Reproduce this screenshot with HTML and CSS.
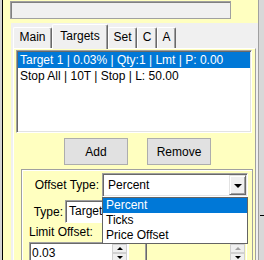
FILE: index.html
```html
<!DOCTYPE html>
<html lang="en">
<head>
    <meta charset="UTF-8">
    <title>Targets</title>
    <link rel="stylesheet" href="styles.css">
</head>
<body>
    <div class="screen">
        <div class="edge-left"></div>
        <div class="frame">
            <div class="status-box"></div>
            <div class="tab-control">
                <div class="tab-strip">
                    <div class="tab tab-main">Main</div>
                    <div class="tab tab-targets active">Targets</div>
                    <div class="tab tab-set">Set</div>
                    <div class="tab tab-c">C</div>
                    <div class="tab tab-a">A</div>
                </div>
                <div class="tab-page">
                    <ul class="listbox">
                        <li class="selected">Target 1 | 0.03% | Qty:1 | Lmt | P: 0.00</li>
                        <li>Stop All | 10T | Stop | L: 50.00</li>
                    </ul>
                    <div class="buttons">
                        <button class="btn btn-add">Add</button>
                        <button class="btn btn-remove">Remove</button>
                    </div>
                    <div class="group">
                        <div class="row row-offset">
                            <label class="lbl lbl-offset">Offset Type:</label>
                            <div class="combo">
                                <span class="combo-text">Percent</span>
                                <span class="combo-arrow"></span>
                                <!-- open dropdown list -->
                                <ul class="dropdown">
                                    <li class="selected">Percent</li>
                                    <li>Ticks</li>
                                    <li>Price Offset</li>
                                </ul>
                            </div>
                        </div>
                        <div class="row row-type">
                            <label class="lbl lbl-type">Type:</label>
                            <div class="textbox">Target</div>
                        </div>
                        <div class="lbl-limit">Limit Offset:</div>
                        <div class="row row-num">
                            <div class="numeric">
                                <span class="num-text">0.03</span>
                                <span class="spin"><span class="spin-up"></span><span class="spin-down"></span></span>
                            </div>
                            <div class="numeric numeric-ro">
                                <span class="num-text"></span>
                                <span class="spin"><span class="spin-up"></span><span class="spin-down"></span></span>
                            </div>
                        </div>
                    </div>
                </div>
            </div>
        </div>
        <div class="edge-right"><span class="tick"></span></div>
    </div>
</body>
</html>
```
FILE: styles.css
```css
* {
    box-sizing: border-box;
}
body {
    margin: 0;
    font-family: "Liberation Sans", Arial, sans-serif;
    font-size: 12px;
    color: #000;
    background: #d8d8d8;
}
.screen {
    display: flex;
    height: 260px;
    overflow: hidden;
}
.edge-left {
    width: 2px;
    background: #d4d4d4;
}
.frame {
    width: 257px;
    display: flex;
    flex-direction: column;
    background: #ffffc0;
    border-left: 1px solid #000;
    border-right: 1px solid #a0a0a0;
    padding: 1px 0 0 7px;
}
.edge-right {
    flex: 1;
    background: #d8d8d8;
    position: relative;
}
.tick {
    position: absolute;
    left: 1px;
    top: 215px;
    width: 5px;
    height: 1px;
    background: #000;
}

/* top read-only box */
.status-box {
    flex-shrink: 0;
    width: 221px;
    height: 18px;
    background: #f0f0f0;
    border: 1px solid #a0a0a0;
    box-shadow: inset 1px 1px 0 #808080;
}

/* tabs */
.tab-control {
    flex: 1 0 auto;
    display: flex;
    flex-direction: column;
    margin: 4px 0 0 1px;
    background: #f0f0f0;
}
.tab-strip {
    flex-shrink: 0;
    display: flex;
    align-items: flex-end;
    height: 25px;
    padding-left: 2px;
}
.tab {
    height: 21px;
    line-height: 19px;
    text-align: center;
    background: #f0f0f0;
    border-top: 1px solid #fff;
    border-left: 1px solid #fff;
    border-right: 1px solid #696969;
    box-shadow: inset -1px 0 0 #a0a0a0;
    border-radius: 2px 2px 0 0;
}
.tab-main { width: 39px; }
.tab-targets { width: 56px; }
.tab-set { width: 29px; }
.tab-c { width: 20px; }
.tab-a { width: 19px; }
.tab.active {
    position: relative;
    z-index: 1;
    height: 25px;
    line-height: 22px;
    margin-bottom: -1px;
}
.tab-page {
    flex: 1 0 auto;
    width: 243px;
    margin-left: 2px;
    padding: 1px 0 0 2px;
    background: #ffffc0;
    border-top: 1px solid #fff;
    border-left: 1px solid #fff;
    border-right: 1px solid #a0a0a0;
}

/* list */
.listbox {
    list-style: none;
    margin: 0;
    width: 236px;
    height: 83px;
    background: #fff;
    border: 1px solid;
    border-color: #a0a0a0 #fff #fff #a0a0a0;
    box-shadow: inset 1px 1px 0 #696969, inset -1px -1px 0 #e3e3e3;
    padding: 1px;
}
.listbox li {
    height: 16px;
    line-height: 16px;
    padding-left: 2px;
    white-space: nowrap;
}
.selected {
    background: #0078d7;
    color: #fff;
}

/* buttons */
.buttons {
    display: flex;
    margin-top: 5px;
    padding-left: 48px;
    gap: 19px;
}
.btn {
    width: 64px;
    height: 27px;
    font: inherit;
    background: #e1e1e1;
    border: 1px solid #adadad;
    padding: 0;
}

/* offset group */
.group {
    margin: 4px 0 0 5px;
    width: 232px;
    height: 100px;
    border: 1px solid #a0a0a0;
    box-shadow: inset 1px 1px 0 #fff;
}
.row {
    display: flex;
    align-items: center;
}
.lbl {
    text-align: right;
}
.row-offset {
    margin-top: 3px;
}
.lbl-offset {
    width: 77px;
    margin-right: 3px;
}
.combo {
    position: relative;
    width: 146px;
    height: 24px;
    background: #fff;
    border: 1px solid;
    border-color: #a0a0a0 #fff #fff #a0a0a0;
    box-shadow: inset 1px 1px 0 #696969, inset -1px -1px 0 #e3e3e3;
    display: flex;
    align-items: center;
    justify-content: space-between;
    padding: 1px 1px 1px 5px;
}
.combo-arrow {
    width: 17px;
    height: 20px;
    background: #f0f0f0;
    border: 1px solid;
    border-color: #e3e3e3 #696969 #696969 #e3e3e3;
    box-shadow: inset 1px 1px 0 #fff, inset -1px -1px 0 #a0a0a0;
    display: flex;
    align-items: center;
    justify-content: center;
}
.combo-arrow::after {
    content: "";
    border-left: 4px solid transparent;
    border-right: 4px solid transparent;
    border-top: 4px solid #000;
    margin-top: 1px;
}
.dropdown {
    position: absolute;
    z-index: 2;
    left: -1px;
    top: 23px;
    width: 146px;
    margin: 0;
    padding: 0;
    list-style: none;
    background: #fff;
    border: 1px solid #646464;
}
.dropdown li {
    height: 15px;
    line-height: 15px;
    padding-left: 3px;
}
.row-type {
    margin-top: 3px;
}
.lbl-type {
    width: 41px;
    margin-right: 2px;
}
.textbox {
    width: 120px;
    height: 23px;
    line-height: 21px;
    padding-left: 3px;
    background: #fff;
    border: 1px solid;
    border-color: #a0a0a0 #fff #fff #a0a0a0;
    box-shadow: inset 1px 1px 0 #696969;
}
.lbl-limit {
    margin: 2px 0 0 7px;
    line-height: 15px;
}
.row-num {
    margin: 2px 0 0 7px;
    align-items: flex-start;
}
.numeric {
    width: 100px;
    height: 22px;
    display: flex;
    justify-content: space-between;
    background: #fff;
    border: 1px solid;
    border-color: #a0a0a0 #fff #fff #a0a0a0;
    box-shadow: inset 1px 1px 0 #696969;
    padding: 1px 1px 0 2px;
}
.num-text {
    line-height: 19px;
}
.numeric-ro {
    width: 102px;
    margin-left: 16px;
    background: #ffffc0;
}
.spin {
    width: 15px;
    display: flex;
    flex-direction: column;
}
.spin-up, .spin-down {
    height: 9px;
    background: #f0f0f0;
    border: 1px solid #d0d0d0;
    display: flex;
    align-items: center;
    justify-content: center;
}
.spin-up::after {
    content: "";
    border-left: 3px solid transparent;
    border-right: 3px solid transparent;
    border-bottom: 3px solid #000;
}
.spin-down::after {
    content: "";
    border-left: 3px solid transparent;
    border-right: 3px solid transparent;
    border-top: 3px solid #000;
}
.numeric-ro .spin-up::after {
    border-bottom-color: #a0a0a0;
}
```
